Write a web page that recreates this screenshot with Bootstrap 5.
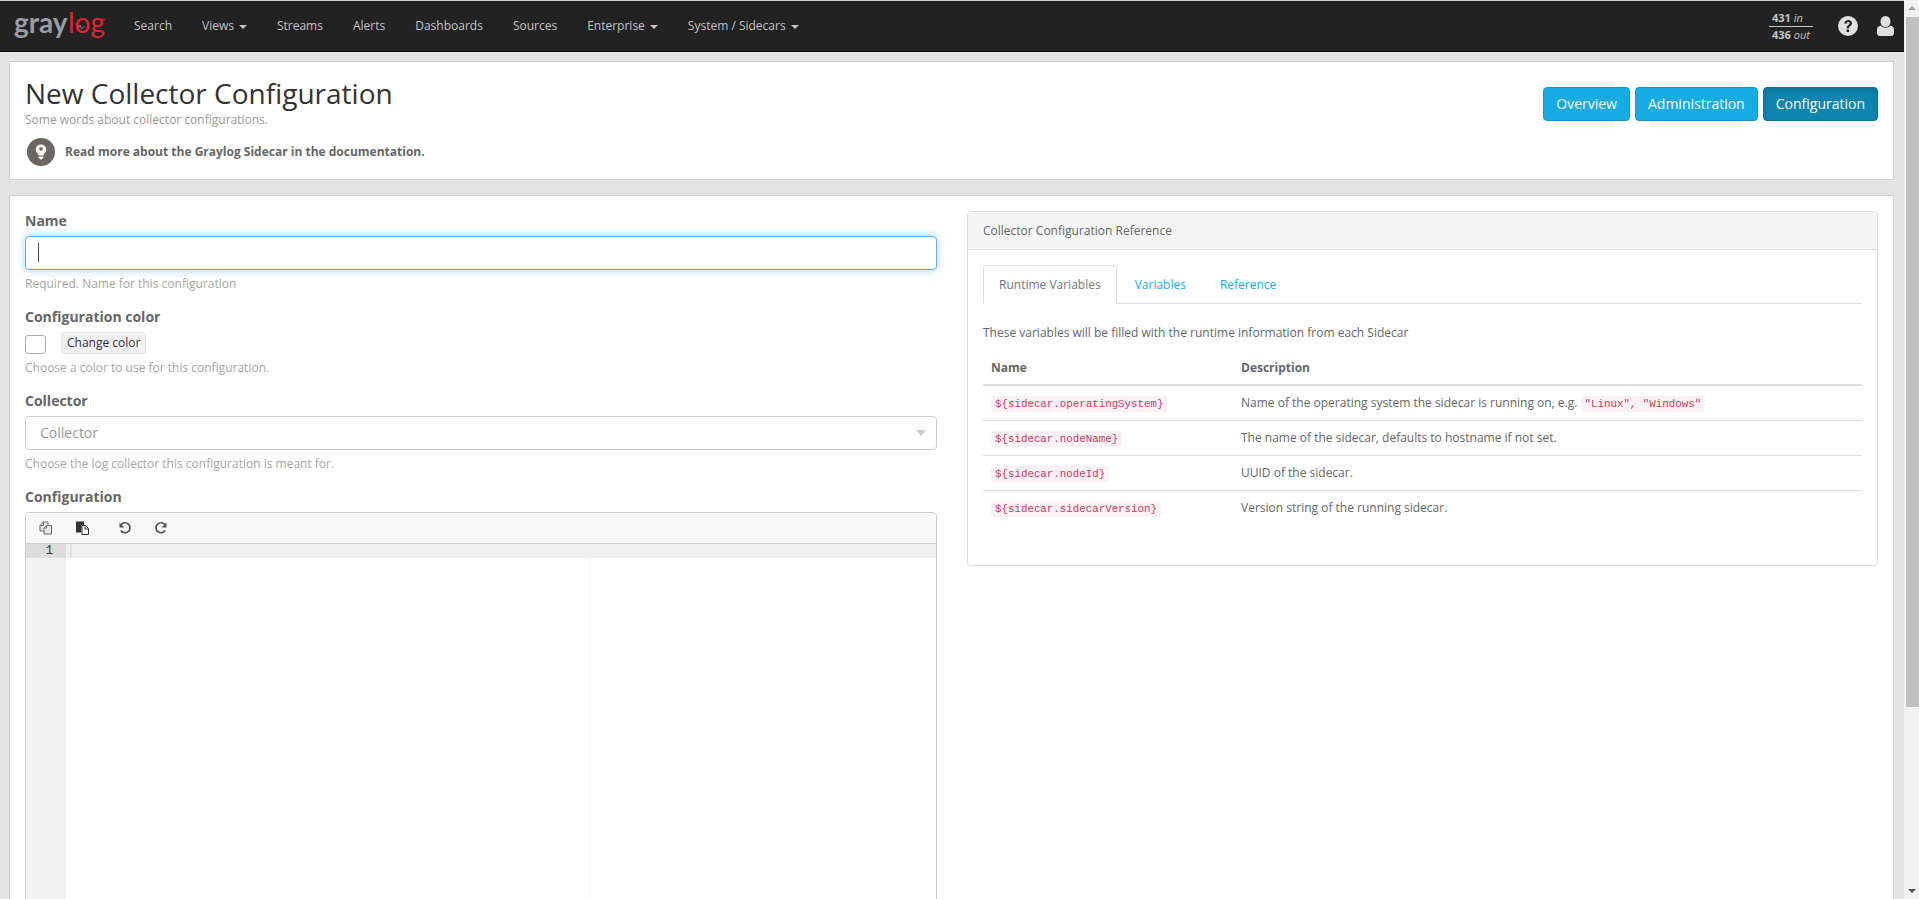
<!DOCTYPE html>
<html lang="en">
<head>
<meta charset="utf-8">
<title>New Collector Configuration</title>
<link href="https://cdn.jsdelivr.net/npm/bootstrap@5.3.0/dist/css/bootstrap.min.css" rel="stylesheet">
<style>
html,body{height:100%;overflow:hidden}
body{font-family:"Open Sans","Liberation Sans",sans-serif;font-size:12px;line-height:1.42857;color:#666;background:#e3e3e3}
.shell{height:899px;overflow:hidden}
.pagearea{width:1904px;height:899px;overflow:hidden;border-top:1px solid #c9c9c9}
.topbar{height:51px;background:#222;border-bottom:1px solid #111;padding-left:14px;padding-right:10px}
.logo{width:92px;height:34px;margin-right:13px;flex:none;overflow:visible}
.logo text{font-family:Lato,"Open Sans",sans-serif;font-size:28px}
.toplink{font-size:12px;color:#c5c5c5;text-decoration:none;padding:0 15px;line-height:20px;white-space:nowrap}
.toplink:hover{color:#fff}
.caretmark{display:inline-block;width:0;height:0;border-top:4px solid #c5c5c5;border-left:4px solid transparent;border-right:4px solid transparent;margin-left:5px;vertical-align:middle}
.rates{width:44px;font-size:11px;line-height:14px;color:#c5c5c5;margin-right:25px}
.rates b{font-weight:700}
.rates div{padding-left:3px}
.rates div:first-child{border-bottom:1px solid #c5c5c5;padding-bottom:1px;margin-bottom:1px}
.panelbox{background:#fff;border:1px solid #d1d1d1;margin-left:9px;margin-right:10px;padding:0 15px}
.headbox{height:119px;margin-top:9px}
.pagetitle{font-size:28px;line-height:30px;font-weight:400;color:#333;margin:16px 0 0}
.subtitle{font-size:12px;line-height:16px;color:#999;margin:4px 0 0}
.bulb{width:28px;height:28px;border-radius:50%;background:#6b6663;margin-left:2px;margin-right:10px;flex:none}
.docnote{font-size:12px;font-weight:700;color:#666;margin-top:10px}
.headbtns{margin-top:25px;gap:5px}
.headbtn{font-size:14px;line-height:20px;padding:6px 12px;color:#fff;background:#16ace3;border:1px solid #1399ca;border-radius:4px;height:34px}
.headbtn:hover{color:#fff;background:#16ace3}
.headbtn.is-current{background:#0e85ae;border-color:#0b6f92;box-shadow:inset 0 3px 5px rgba(0,0,0,.125)}
.formbox{margin-top:15px;height:900px;padding-top:15px}
.colleft{width:912px;flex:none}
.colright{width:911px;flex:none}
.fieldlabel{display:block;font-size:14px;font-weight:700;color:#666;line-height:20px;margin:0 0 5px}
.fieldinput{display:block;width:100%;height:34px;border:1px solid #66afe9;border-radius:4px;background:#fff;box-shadow:inset 0 1px 1px rgba(0,0,0,.075),0 0 8px rgba(102,175,233,.6);outline:0;padding:6px 12px;font-size:14px;caret-color:#333}
.caretline{width:1px;height:19px;background:#444;left:13px;top:7px}
.fieldwrap{position:relative}
.helpnote{font-size:12px;line-height:17px;color:#a9a5a3;margin:5px 0 0}
.fieldgroup{margin-bottom:15px}
.swatch{width:21px;height:19px;border:1px solid #aaa;border-radius:3px;background:#fff;margin-right:15px;margin-top:3px}
.changebtn{font-size:12px;line-height:18px;height:22px;padding:1px 5px;color:#333;background:#f0f0f0;border:1px solid #e6e6e6;border-radius:3px}
.pickbox{height:34px;border:1px solid #ccc;border-radius:4px;padding:0 10px 0 14px;font-size:14px;color:#999;line-height:32px}
.pickarrow{width:0;height:0;border-top:6px solid #ccc;border-left:5.5px solid transparent;border-right:5.5px solid transparent}
.editorbox{border:1px solid #ccc;border-radius:4px 4px 0 0;height:600px;overflow:hidden}
.editorbar{height:31px;background:#f8f8f8;border-bottom:1px solid #ccc;padding-left:13px}
.editorbar svg{width:14px;height:14px;flex:none}
.editormain{height:569px;position:relative}
.linegutter{width:40px;background:#f2f2f2;flex:none;height:100%}
.lineactive{height:14px;background:#dcdcdc;font-family:"Liberation Mono",monospace;font-size:12px;line-height:14px;color:#333;text-align:right;padding-right:13px}
.codearea{position:relative;flex:1}
.codeactive{height:14px;background:#efefef}
.codeactive span{display:block;width:2px;height:14px;background:#e2e2e2;margin-left:4px}
.printmargin{left:523px;top:14px;bottom:0;width:1px;background:#f2f2f2}
.refbox{border:1px solid #ddd;border-radius:4px;height:355px;box-shadow:0 1px 1px rgba(0,0,0,.05)}
.refhead{height:38px;background:#f5f5f5;border-bottom:1px solid #ddd;padding:0 15px;line-height:37px;font-size:12px;border-radius:3px 3px 0 0;color:#666}
.refbody{padding:15px}
.tabrow{height:39px;border-bottom:1px solid #ddd}
.tabitem{font-size:12px;line-height:18px;padding:10px 15px;color:#16ace3;text-decoration:none;height:39px;margin-right:2px;border:1px solid transparent}
.tabitem.is-on{color:#777;background:#fff;border-color:#ddd #ddd #fff;border-radius:4px 4px 0 0}
.tabnote{font-size:12px;line-height:17px;margin:20px 0 0;color:#666}
.reftable{width:100%;margin-top:10px;border-collapse:collapse;font-size:12px;color:#666}
.reftable th{font-weight:700;padding:8px;line-height:17px;border-bottom:2px solid #ddd}
.reftable td{padding:8px;line-height:18px;height:35px;border-bottom:1px solid #ddd;vertical-align:middle}
.reftable tr:last-child td{border-bottom:0}
.reftable .namecol{width:250px}
.codechip{font-family:"Liberation Mono",monospace;font-size:10.8px;line-height:16px;color:#cf3a60;background:#f9f2f4;border-radius:4px;padding:0 4px;display:inline-block;vertical-align:middle}
.scrolltrack{width:15px;height:899px;background:#f1f1f1;flex:none;position:relative}
.scrollthumb{height:690px;background:#c1c1c1;margin:17px 0 0 2px;width:13px}
.scrollup,.scrolldown{left:4px;width:0;height:0;border-left:4px solid transparent;border-right:4px solid transparent}
.scrollup{top:6px;border-bottom:4px solid #a3a3a3}
.scrolldown{bottom:6px;border-top:4px solid #505050}
</style>
</head>
<body>
<div class="shell d-flex">
<div class="pagearea">
  <nav class="topbar d-flex align-items-center">
    <svg class="logo" viewBox="0 0 92 34" aria-label="graylog">
      <text x="0" y="24" fill="#9a9da8" font-weight="700">gray</text>
      <text x="54" y="24" fill="#e3222f" font-weight="400">log</text>
      <path d="M63 18h2l1-2 1.500 4 1-2h2" fill="none" stroke="#9a9da8" stroke-width=".7"/>
    </svg>
    <a class="toplink" href="#">Search</a>
    <a class="toplink" href="#">Views<i class="caretmark"></i></a>
    <a class="toplink" href="#">Streams</a>
    <a class="toplink" href="#">Alerts</a>
    <a class="toplink" href="#">Dashboards</a>
    <a class="toplink" href="#">Sources</a>
    <a class="toplink" href="#">Enterprise<i class="caretmark"></i></a>
    <a class="toplink" href="#">System / Sidecars<i class="caretmark"></i></a>
    <div class="ms-auto d-flex align-items-center">
      <div class="rates"><div><b>431</b> <i>in</i></div><div><b>436</b> <i>out</i></div></div>
      <svg width="20" height="20" viewBox="0 0 20 20" style="margin-right:19px"><circle cx="10" cy="10" r="10" fill="#e0e0e0"/><path d="M6.300 7.600C6.500 5.200 8.200 4 10.200 4c2.200 0 3.800 1.400 3.800 3.200 0 2.700-3 2.700-3 5H8.600c0-3 3-3.200 3-5 0-.8-.6-1.300-1.500-1.300-1 0-1.400.7-1.500 1.800z M8.600 13.500h2.500V16H8.600z" fill="#222"/></svg>
      <svg width="17" height="20" viewBox="0 0 17 20"><ellipse cx="8.500" cy="5.500" rx="5" ry="5.500" fill="#e0e0e0"/><path d="M0 17v-3.500C0 11 2 10 3.800 9.600c1 1.400 2.800 2.200 4.700 2.200s3.700-.8 4.700-2.200c1.800.4 3.800 1.400 3.800 3.900V17c0 1.800-1.300 3-3 3H3c-1.700 0-3-1.200-3-3z" fill="#e0e0e0"/></svg>
    </div>
  </nav>

  <section class="panelbox headbox">
    <div class="d-flex justify-content-between">
      <div>
        <h1 class="pagetitle">New Collector Configuration</h1>
        <p class="subtitle">Some words about collector configurations.</p>
        <div class="docnote d-flex align-items-center">
          <span class="bulb d-flex align-items-center justify-content-center">
            <svg width="12" height="16" viewBox="0 0 12 16"><path d="M6 .5C2.900.5.700 2.700.7 5.600c0 2 1.200 3 2 4.100.4.600.6 1.100.7 1.800h5.200c.1-.7.300-1.200.7-1.800.8-1.100 2-2.100 2-4.100C11.300 2.700 9.100.5 6 .5z" fill="#f3f3f3"/><circle cx="6" cy="5" r="1.800" fill="#6b6663"/><path d="M3.600 12.500h4.800v1.300l-1 .7-.5 1H5.100l-.5-1-1-.7z" fill="#f3f3f3"/></svg>
          </span>
          Read more about the Graylog Sidecar in the documentation.
        </div>
      </div>
      <div class="d-flex headbtns">
        <a class="btn headbtn" href="#">Overview</a>
        <a class="btn headbtn" href="#">Administration</a>
        <a class="btn headbtn is-current" href="#">Configuration</a>
      </div>
    </div>
  </section>

  <section class="panelbox formbox d-flex justify-content-between">
    <form class="colleft">
      <div class="fieldgroup">
        <label class="fieldlabel" for="cfgname">Name</label>
        <div class="fieldwrap"><input id="cfgname" class="fieldinput" type="text"><span class="caretline position-absolute"></span></div>
        <p class="helpnote">Required. Name for this configuration</p>
      </div>
      <div class="fieldgroup">
        <label class="fieldlabel">Configuration color</label>
        <div class="d-flex align-items-start">
          <span class="swatch"></span>
          <button type="button" class="changebtn">Change color</button>
        </div>
        <p class="helpnote">Choose a color to use for this configuration.</p>
      </div>
      <div class="fieldgroup">
        <label class="fieldlabel">Collector</label>
        <div class="pickbox d-flex align-items-center justify-content-between"><span>Collector</span><i class="pickarrow"></i></div>
        <p class="helpnote">Choose the log collector this configuration is meant for.</p>
      </div>
      <div class="fieldgroup">
        <label class="fieldlabel">Configuration</label>
        <div class="editorbox">
          <div class="editorbar d-flex align-items-center">
            <svg viewBox="0 0 14 14" style="margin-right:22px"><path d="M1 4.500 4.500 1H9v2.500M4.500 1v3.500H1V10h3.500M5 13V7l2.500-2.500H12.500V13z M7.500 4.500V7H5" fill="#e8e8e8" stroke="#666" stroke-width="1"/></svg>
            <svg viewBox="0 0 14 14" style="margin-right:29px"><path d="M1 .5h8v3.500H6.500v7.500H1z" fill="#333"/><path d="M7 4.500h3.500L13.500 7.500v6H7z" fill="#fff" stroke="#333"/><path d="M10 4.500v3.500h3.500" fill="none" stroke="#333"/></svg>
            <svg viewBox="0 0 14 14" style="margin-right:22px"><path d="M3.200 3.500A5 5 0 1 1 2.800 9.500" fill="none" stroke="#555" stroke-width="1.700"/><path d="M1.500 1.500v5h5z" fill="#555"/></svg>
            <svg viewBox="0 0 14 14"><path d="M10.800 3.500A5 5 0 1 0 11.200 9.500" fill="none" stroke="#555" stroke-width="1.700"/><path d="M12.500 1.500v5h-5z" fill="#555"/></svg>
          </div>
          <div class="editormain d-flex">
            <div class="linegutter"><div class="lineactive">1</div></div>
            <div class="codearea"><div class="codeactive"><span></span></div><div class="printmargin position-absolute"></div></div>
          </div>
        </div>
      </div>
    </form>
    <div class="colright">
      <div class="refbox">
        <div class="refhead">Collector Configuration Reference</div>
        <div class="refbody">
          <div class="tabrow d-flex">
            <a class="tabitem is-on" href="#">Runtime Variables</a>
            <a class="tabitem" href="#">Variables</a>
            <a class="tabitem" href="#">Reference</a>
          </div>
          <p class="tabnote">These variables will be filled with the runtime information from each Sidecar</p>
          <table class="reftable">
            <thead><tr><th class="namecol">Name</th><th>Description</th></tr></thead>
            <tbody>
              <tr><td><code class="codechip">${sidecar.operatingSystem}</code></td><td>Name of the operating system the sidecar is running on, e.g. <code class="codechip">"Linux", "Windows"</code></td></tr>
              <tr><td><code class="codechip">${sidecar.nodeName}</code></td><td>The name of the sidecar, defaults to hostname if not set.</td></tr>
              <tr><td><code class="codechip">${sidecar.nodeId}</code></td><td>UUID of the sidecar.</td></tr>
              <tr><td><code class="codechip">${sidecar.sidecarVersion}</code></td><td>Version string of the running sidecar.</td></tr>
            </tbody>
          </table>
        </div>
      </div>
    </div>
  </section>
</div>
<aside class="scrolltrack">
  <div class="scrollthumb"></div>
  <i class="scrollup position-absolute"></i>
  <i class="scrolldown position-absolute"></i>
</aside>
</div>
<script src="https://cdn.jsdelivr.net/npm/bootstrap@5.3.0/dist/js/bootstrap.bundle.min.js"></script>
</body>
</html>
